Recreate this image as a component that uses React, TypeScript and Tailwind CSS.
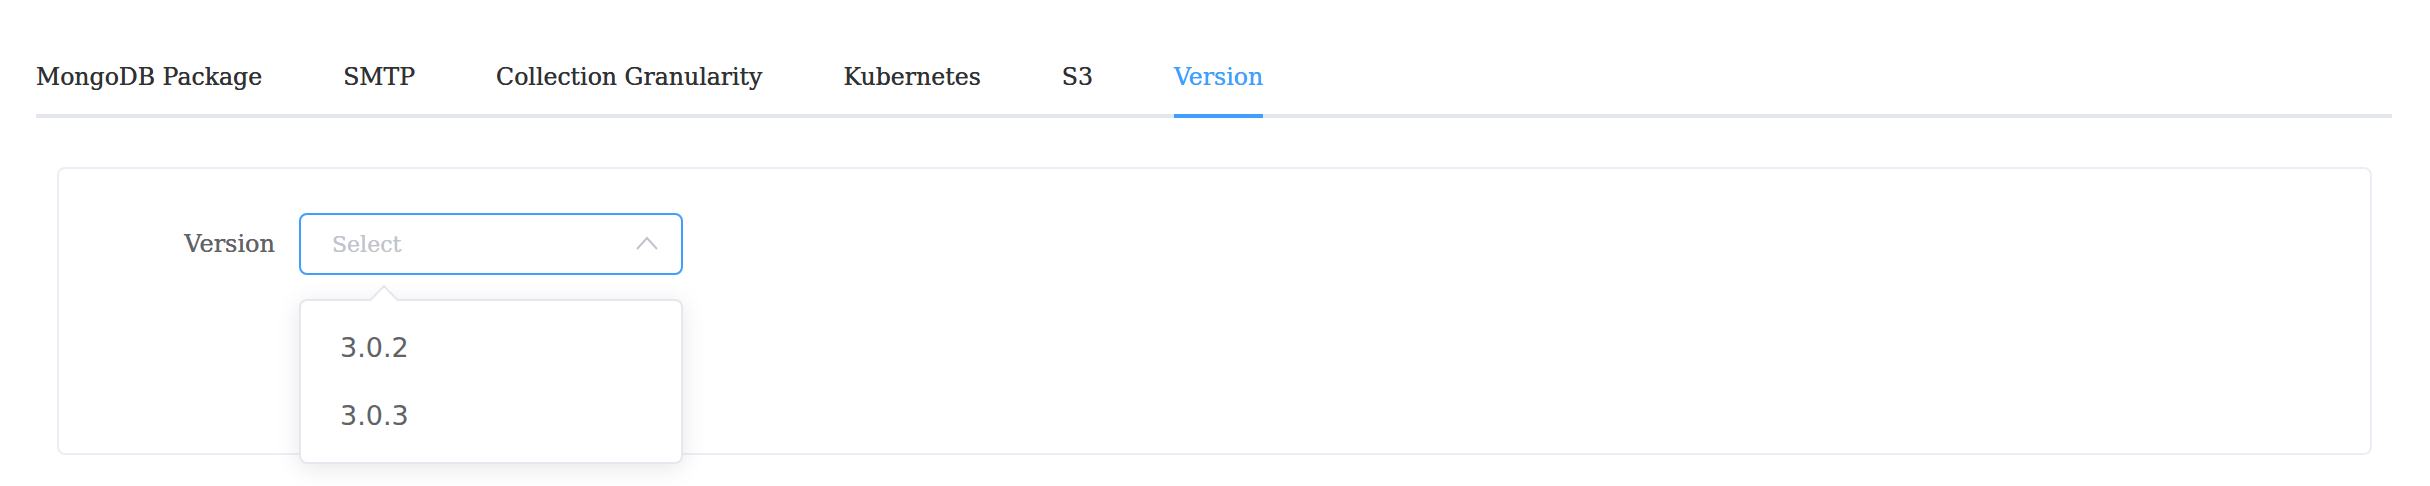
const tabs = ["MongoDB Package", "SMTP", "Collection Granularity", "Kubernetes", "S3", "Version"];

export default function App() {
  const active = "Version";

  return (
    <div className="w-[2430px] h-[486px] bg-white pt-[38px] pl-[36px] pr-[38px] font-['DejaVu_Serif',serif]">
      {/* tabs header */}
      <div className="flex gap-[81px] border-b-4 border-[#E4E7ED]">
        {tabs.map((t) => (
          <div
            key={t}
            className={
              t === active
                ? "h-[80px] -mb-[4px] pt-[4px] flex items-center border-b-4 border-[#409EFF] text-[#409EFF] text-[23.6px] [text-shadow:0_0_0.6px_#409EFF]"
                : "h-[80px] -mb-[4px] pt-[4px] flex items-center border-b-4 border-transparent text-[#303133] text-[23.6px] [text-shadow:0_0_0.6px_#303133]"
            }
          >
            {t}
          </div>
        ))}
      </div>

      {/* card */}
      <div className="mt-[49px] ml-[21px] mr-[20px] h-[288px] rounded-[8px] border-2 border-[#EBEEF5] bg-white pt-[44px] pl-[40px]">
        <div className="flex items-start">
          <div className="w-[200px] h-[62px] pr-[24px] flex items-center justify-end text-[24px] text-[#606266] [text-shadow:0_0_0.5px_#606266]">
            Version
          </div>
          <div className="relative w-[384px]">
            <div className="h-[62px] rounded-[8px] border-2 border-[#409EFF] flex items-center justify-between pl-[31px] pr-[23px]">
              <span className="text-[22px] text-[#C0C4CC] [text-shadow:0_0_0.5px_#C0C4CC]">Select</span>
              <svg width="22" height="14" viewBox="0 0 22 14" fill="none" className="mt-[-3px]">
                <polyline points="1,13 11,2 21,13" stroke="#C0C4CC" strokeWidth="2" />
              </svg>
            </div>

            {/* dropdown */}
            <div className="absolute left-0 top-[86px] w-[384px] rounded-[8px] border-2 border-[#E4E7ED] bg-white pt-[13px] pb-[12px] shadow-[0_4px_24px_rgba(0,0,0,0.1)] z-10">
              <div className="absolute -top-[12px] left-[73px] w-[20px] h-[20px] rotate-45 bg-white border-l-2 border-t-2 border-[#E4E7ED]" />
              {["3.0.2", "3.0.3"].map((v) => (
                <div
                  key={v}
                  className="relative h-[68px] flex items-center pl-[39px] text-[27px] text-[#606266] font-['DejaVu_Sans',sans-serif]"
                >
                  {v}
                </div>
              ))}
            </div>
          </div>
        </div>
      </div>
    </div>
  );
}
